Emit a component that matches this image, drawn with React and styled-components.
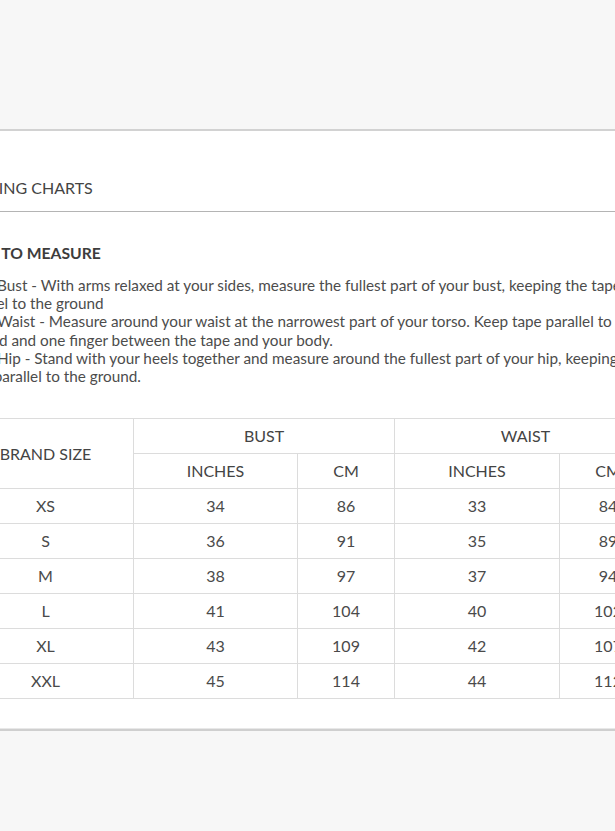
import React from "react";
import styled, { createGlobalStyle } from "styled-components";

const Global = createGlobalStyle`
  html, body { margin: 0; padding: 0; }
  body {
    background: #f7f7f7;
    font-family: Lato, "Open Sans", sans-serif;
    color: #4a4a4a;
    overflow: hidden;
    width: 615px;
    height: 831px;
  }
`;

const Page = styled.div`
  width: 615px;
  height: 831px;
  overflow: hidden;
  display: flex;
  flex-direction: column;
`;

const TopBand = styled.div`
  height: 129px;
  flex: none;
`;

const Panel = styled.section`
  background: #fff;
  border-top: 2px solid #d2d2d2;
  border-bottom: 2px solid #cfcfcf;
  box-shadow: 0 -1px 0 #e8e8e8 inset;
  flex: none;
  overflow: hidden;
`;

const Inner = styled.div`
  width: 960px;
  margin-left: -40px;
`;

const Header = styled.header`
  padding: 47px 0 13px 16px;
  border-bottom: 1px solid #b4b4b4;
`;

const Title = styled.h2`
  margin: 0;
  font-size: 16px;
  line-height: 20px;
  font-weight: 400;
  color: #444;
`;

const Body = styled.div`
  padding: 31px 0 30px 0;
`;

const Heading = styled.h3`
  margin: 0 0 0 -3px;
  font-size: 15.7px;
  line-height: 20px;
  font-weight: 700;
  color: #3d3d3d;
`;

const Steps = styled.div`
  margin-top: 13px;
  width: 700px;
  font-size: 15.3px;
  line-height: 18.2px;
  color: #4c4c4c;
`;

const Step = styled.div``;

const Marker = styled.span`
  display: inline-block;
  width: 37px;
`;

const Table = styled.table`
  margin-top: 33px;
  margin-left: -3px;
  width: 960px;
  border-collapse: collapse;
  table-layout: fixed;
  font-size: 16px;
  color: #4a4a4a;
`;

const Cell = styled.td`
  border: 1px solid #dcdcdc;
  height: 34px;
  padding: 0;
  text-align: center;
  vertical-align: middle;
  line-height: 20px;
  font-weight: 400;
`;

const HeadCell = styled(Cell).attrs({ as: "th" })`
  font-weight: 400;
  color: #444;
`;

const rows = [
  ["XS", 34, 86, 33, 84, 37, 94],
  ["S", 36, 91, 35, 89, 39, 99],
  ["M", 38, 97, 37, 94, 41, 104],
  ["L", 41, 104, 40, 102, 44, 112],
  ["XL", 43, 109, 42, 107, 46, 117],
  ["XXL", 45, 114, 44, 112, 48, 122],
];

const widths = [176, 164, 97, 165, 97, 164, 97];

export default function App() {
  return (
    <>
      <Global />
      <Page>
        <TopBand />
        <Panel>
          <Inner>
            <Header>
              <Title>SIZING CHARTS</Title>
            </Header>
            <Body>
              <Heading>HOW TO MEASURE</Heading>
              <Steps>
                <Step>
                  <Marker>1.</Marker>Bust - With arms relaxed at your sides, measure the fullest part of your bust, keeping the tape parallel to the ground
                </Step>
                <Step>
                  <Marker>2.</Marker>Waist - Measure around your waist at the narrowest part of your torso. Keep tape parallel to the ground and one finger between the tape and your body.
                </Step>
                <Step>
                  <Marker>3.</Marker>Hip - Stand with your heels together and measure around the fullest part of your hip, keeping the tape parallel to the ground.
                </Step>
              </Steps>
              <Table>
                <colgroup>
                  {widths.map((w, i) => (
                    <col key={i} style={{ width: w }} />
                  ))}
                </colgroup>
                <thead>
                  <tr>
                    <HeadCell rowSpan={2}>BRAND SIZE</HeadCell>
                    <HeadCell colSpan={2}>BUST</HeadCell>
                    <HeadCell colSpan={2}>WAIST</HeadCell>
                    <HeadCell colSpan={2}>HIP</HeadCell>
                  </tr>
                  <tr>
                    <HeadCell>INCHES</HeadCell>
                    <HeadCell>CM</HeadCell>
                    <HeadCell>INCHES</HeadCell>
                    <HeadCell>CM</HeadCell>
                    <HeadCell>INCHES</HeadCell>
                    <HeadCell>CM</HeadCell>
                  </tr>
                </thead>
                <tbody>
                  {rows.map((r) => (
                    <tr key={r[0]}>
                      {r.map((v, i) => (
                        <Cell key={i}>{v}</Cell>
                      ))}
                    </tr>
                  ))}
                </tbody>
              </Table>
            </Body>
          </Inner>
        </Panel>
      </Page>
    </>
  );
}
